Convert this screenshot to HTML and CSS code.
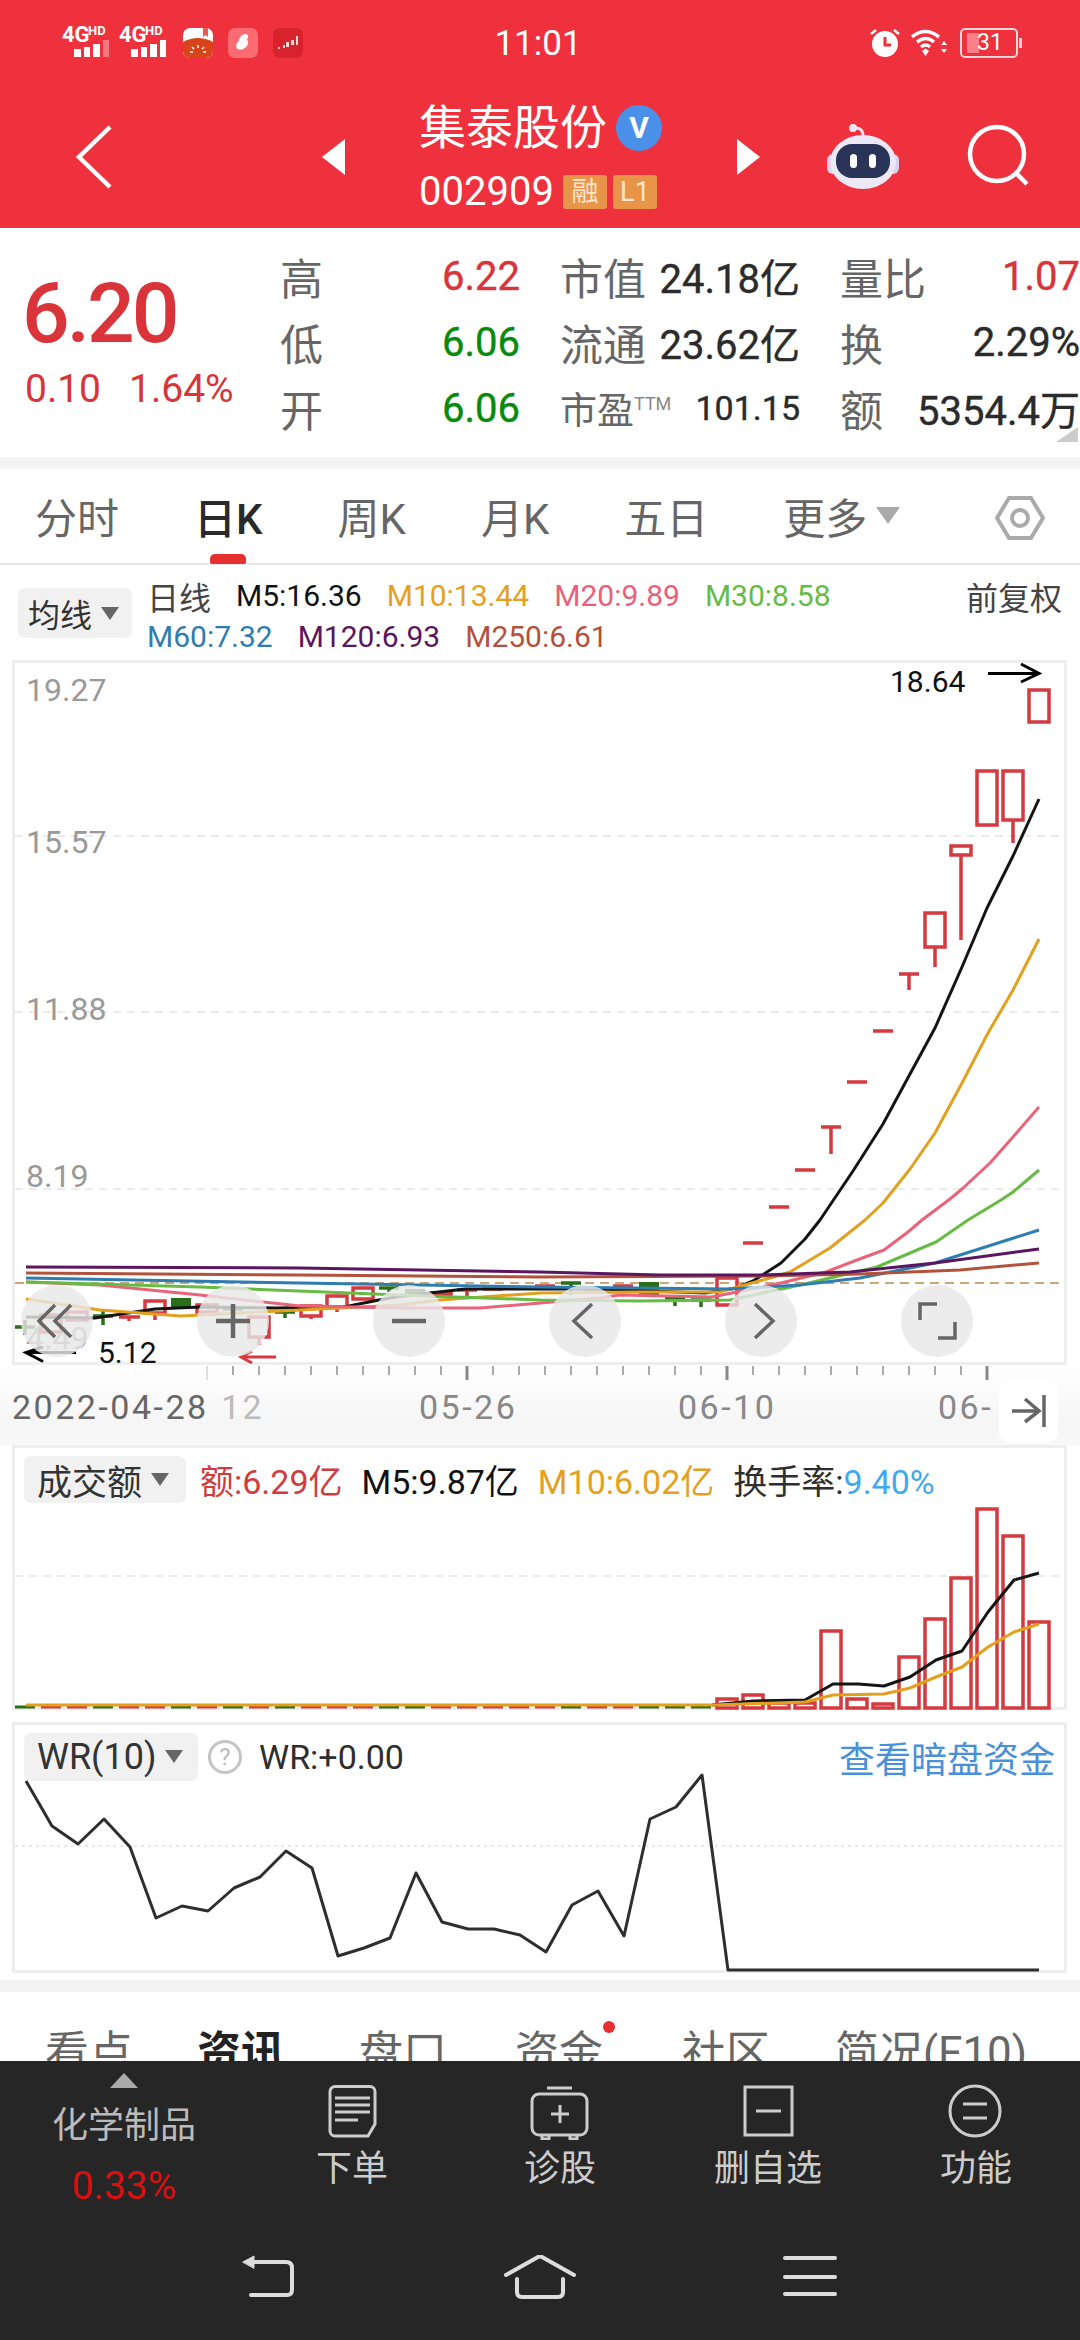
FILE: index.html
```html
<!DOCTYPE html>
<html lang="zh-CN">
  <head>
    <meta charset="UTF-8" />
    <meta name="viewport" content="width=device-width, initial-scale=1.0" />
    <title>集泰股份 002909</title>
    <link rel="stylesheet" href="styles.css">
  </head>
  <body>
    <div class="app">
      <!-- Top red header -->
      <header class="top">
        <div class="status">
          <div class="status-left">
            <svg class="signal" viewBox="0 -8 52 50" width="52" height="50">
              <text class="sig-4g" x="0" y="16">4G</text>
              <text class="sig-hd" x="26" y="9">HD</text>
              <path class="sig-bar" d="M12 23h7v8h-7zM22 21h6v10h-6zM31 18h7v13h-7z" />
              <path class="sig-off" d="M41 14h6v17h-6z" />
            </svg>
            <svg class="signal" viewBox="0 -8 52 50" width="52" height="50">
              <text class="sig-4g" x="0" y="16">4G</text>
              <text class="sig-hd" x="26" y="9">HD</text>
              <path class="sig-bar" d="M12 23h7v8h-7zM22 21h6v10h-6zM31 18h7v13h-7zM41 14h6v17h-6z" />
            </svg>
            <svg class="app-icon" viewBox="0 0 30 30" width="30" height="30">
              <rect class="i-white" width="30" height="30" rx="7" />
              <path class="i-orange" d="M0 14q15-8 30 0v9a7 7 0 0 1-7 7H7a7 7 0 0 1-7-7z" />
              <path class="i-mark" d="M20 0h5v9l-2.5-2-2.5 2z" />
              <path class="i-line" d="M15 17v3M9 19l2 2M21 19l-2 2M7 24h3M20 24h3" />
            </svg>
            <svg class="app-icon" viewBox="0 0 30 30" width="30" height="30">
              <rect class="i-pink" width="30" height="30" rx="7" />
              <path class="i-blob" d="M18 6c-5 0-7 4-7 7-3 2-4 6-1 8 4 2 10-2 10-6 0-2-1-3-1-4 2-1 1-5-1-5z" />
            </svg>
            <svg class="app-icon" viewBox="0 0 30 30" width="30" height="30">
              <rect class="i-dark" width="30" height="30" rx="7" />
              <path class="i-chart" d="M5 19h2v2H5zM10 17h2v3h-2zM13 14h3v5h-3zM18 12h3v5h-3zM23 8h2v9h-2z" />
            </svg>
          </div>
          <div class="clock">11:01</div>
          <div class="status-right">
            <svg viewBox="0 0 30 30" width="30" height="30">
              <circle class="i-fill" cx="15" cy="16" r="13" />
              <path class="i-hand" d="M15 9v8h6" />
              <path class="i-ear" d="M1 6l5-4M29 6l-5-4" />
            </svg>
            <svg viewBox="0 0 38 30" width="38" height="30">
              <path class="i-wave" d="M1 9q13-11 27 0M6 14q9-7 17 0M10 19q5-4 9 0" />
              <path class="i-fill" d="M11 23l3.5-2.5L18 23l-3.5 5zM30 17l3-4 3 4zM30 21h6l-3 4z" />
            </svg>
            <div class="battery">
              <span class="battery-level"></span>
              <span class="battery-num">31</span>
            </div>
          </div>
        </div>

        <div class="nav">
          <svg class="back" viewBox="0 0 40 66" width="40" height="66">
            <path d="M35 3L4 33l31 30" />
          </svg>
          <span class="tri tri-left"></span>
          <div class="title">
            <div class="title-row">
              <span class="name">集泰股份</span>
              <span class="vbadge">V</span>
            </div>
            <div class="code-row">
              <span class="code">002909</span>
              <span class="tag">融</span>
              <span class="tag">L1</span>
            </div>
          </div>
          <span class="tri tri-right"></span>
          <svg class="robot" viewBox="0 0 72 66" width="72" height="66">
            <path class="r-ant" d="M27 4q9-1 9 8" />
            <circle class="r-shell" cx="26" cy="4" r="4" />
            <rect class="r-ear" x="0" y="30" width="72" height="20" rx="6" />
            <ellipse class="r-shell" cx="36" cy="38" rx="33" ry="27" />
            <rect class="r-visor" x="9" y="20" width="54" height="34" rx="16" />
            <rect class="r-eye" x="23" y="30" width="7" height="14" rx="3.5" />
            <rect class="r-eye" x="42" y="30" width="7" height="14" rx="3.5" />
          </svg>
          <svg class="search" viewBox="0 0 62 66" width="62" height="66">
            <circle cx="30" cy="30" r="27" />
            <path d="M49 49l11 11" />
          </svg>
        </div>
      </header>

      <!-- Quote summary -->
      <section class="quote">
        <div class="price-box">
          <div class="price">6.20</div>
          <div class="change"><span>0.10</span><span>1.64%</span></div>
        </div>
        <div class="stats">
          <div class="cell"><span class="lab">高</span><span class="val red">6.22</span></div>
          <div class="cell"><span class="lab">市值</span><span class="val">24.18亿</span></div>
          <div class="cell"><span class="lab">量比</span><span class="val red">1.07</span></div>
          <div class="cell"><span class="lab">低</span><span class="val green">6.06</span></div>
          <div class="cell"><span class="lab">流通</span><span class="val">23.62亿</span></div>
          <div class="cell"><span class="lab">换</span><span class="val">2.29%</span></div>
          <div class="cell"><span class="lab">开</span><span class="val green">6.06</span></div>
          <div class="cell"><span class="lab lab-sm">市盈<sup class="ttm">TTM</sup></span><span class="val val-sm">101.15</span></div>
          <div class="cell"><span class="lab">额</span><span class="val">5354.4万</span></div>
        </div>
        <span class="corner"></span>
      </section>

      <div class="divider"></div>

      <!-- Period tabs -->
      <nav class="periods">
        <span>分时</span>
        <span class="active">日K</span>
        <span>周K</span>
        <span>月K</span>
        <span>五日</span>
        <span class="more">更多<i class="caret"></i></span>
        <svg class="hex" viewBox="0 0 50 50" width="50" height="50">
          <path d="M14 5h22l12 20-12 20H14L2 25z" />
          <circle cx="25" cy="25" r="8" />
        </svg>
      </nav>

      <div class="legend">
        <div class="pick pick-ma">均线<i class="caret-s"></i></div>
        <div class="legend-rows">
          <div class="legend-row">
            <span class="c-gray">日线</span>
            <span class="c-black">M5:16.36</span>
            <span class="c-orange">M10:13.44</span>
            <span class="c-pink">M20:9.89</span>
            <span class="c-lime">M30:8.58</span>
            <span class="adj">前复权</span>
          </div>
          <div class="legend-row">
            <span class="c-blue">M60:7.32</span>
            <span class="c-purple">M120:6.93</span>
            <span class="c-brown">M250:6.61</span>
          </div>
        </div>
      </div>

      <!-- Candles + moving averages -->
      <div class="panel panel-main">
        <svg class="plot" viewBox="15 663 1049 699" width="1049" height="699">
          <path class="grid" d="M15 836H1064M15 1012H1064M15 1189H1064" />
          <path class="base" d="M15 1283H1064" />
          <text class="axis-price" x="26" y="701">19.27</text>
          <text class="axis-price" x="26" y="853">15.57</text>
          <text class="axis-price" x="26" y="1020">11.88</text>
          <text class="axis-price" x="26" y="1187">8.19</text>
          <text class="axis-price" x="26" y="1349">4.49</text>

          <path class="k-down" d="M15 1327h20M25 1320v15M93 1316h20M103 1310v15M223 1309h20M275 1312h20M285 1312v6M379 1288h20M389 1288v4M561 1283h20M571 1283v12M665 1298h20M675 1298v8M691 1300h20M701 1300v7" />
          <path class="k-solid" d="M171 1298h20v10h-20zM405 1289h20v6h-20zM639 1282h20v13h-20z" />
          <path class="k-up" d="M41 1315h20v17h-20zM67 1312h20v8h-20zM119 1317h21M129 1317v4M145 1301h20v12h-20zM155 1313v7M197 1305h20v7h-20zM249 1317h20v20h-20zM259 1337v8M301 1306h20v10h-20zM311 1316v3M327 1296h20v11h-20zM337 1307v5M353 1288h20v11h-20zM431 1293h20v3h-20zM457 1290h20M467 1290v6M483 1289h20M509 1288h20M535 1286h20M587 1292h20M613 1286h20M623 1286v6M717 1278h20v27h-20zM743 1243h20M769 1207h20M795 1170h20M821 1127h20M831 1127v27M847 1082h20M873 1031h20M899 974h20M909 974v16M925 913h20v34h-20zM935 947v20M951 846h20v9h-20zM961 855v85M977 771h20v54h-20zM1003 771h20v49h-20zM1013 820v23M1029 690h20v32h-20z" />

          <polyline class="ma ma5" points="26,1317 95,1318 155,1309 200,1307 275,1308 344,1307 379,1300 396,1297 430,1293 465,1289 527,1289 600,1289 678,1292 705,1293 736,1288 753,1281 781,1263 805,1239 820,1220 853,1171 883,1124 910,1074 935,1028 962,967 987,908 1013,856 1039,799" />
          <polyline class="ma ma10" points="26,1299 100,1310 181,1316 280,1311 400,1305 440,1300 540,1293 640,1292 720,1292 770,1278 790,1272 830,1248 865,1220 883,1203 910,1169 935,1133 962,1083 988,1033 1013,990 1039,939" />
          <polyline class="ma ma20" points="26,1282 100,1285 200,1295 300,1306 400,1308 480,1308 600,1298 619,1295 712,1297 781,1283 826,1272 857,1260 884,1250 908,1232 922,1220 950,1199 962,1189 990,1163 1013,1137 1039,1107" />
          <polyline class="ma ma30" points="26,1282 200,1287 400,1295 540,1300 640,1301 730,1300 800,1285 877,1267 936,1242 968,1220 1001,1200 1013,1192 1039,1170" />
          <polyline class="ma ma60" points="26,1278 300,1283 540,1287 730,1289 800,1285 860,1278 935,1263 1039,1230" />
          <polyline class="ma ma250" points="26,1273 300,1275 540,1277 760,1276 860,1274 960,1270 1039,1263" />
          <polyline class="ma ma120" points="26,1267 300,1268 540,1272 660,1275 760,1275 850,1272 935,1263 1039,1249" />

          <text class="mark" x="890" y="692">18.64</text>
          <path class="arrow" d="M988 673.5H1039M1021 664l18 9.5-18 8.5" />
          <text class="mark" x="98" y="1363">5.12</text>
          <path class="arrow" d="M76 1352.5H26M43 1347l-17 5.5 17 9" />
          <path class="arrow-red" d="M276 1357H241M252 1351l-11 6 11 6" />
        </svg>

        <!-- Floating chart controls -->
        <div class="controls">
          <span class="ctl"><svg viewBox="0 0 72 72" width="72" height="72"><path d="M34 20L18 36l16 16M50 20L34 36l16 16" /></svg></span>
          <span class="ctl"><svg viewBox="0 0 72 72" width="72" height="72"><path class="thick" d="M19 36h34M36 19v34" /></svg></span>
          <span class="ctl"><svg viewBox="0 0 72 72" width="72" height="72"><path class="thick" d="M19 36h34" /></svg></span>
          <span class="ctl"><svg viewBox="0 0 72 72" width="72" height="72"><path d="M43 19L25 36l18 17" /></svg></span>
          <span class="ctl"><svg viewBox="0 0 72 72" width="72" height="72"><path d="M30 19l18 17-18 17" /></svg></span>
          <span class="ctl"><svg viewBox="0 0 72 72" width="72" height="72"><path d="M19 35V19h17M54 37v16H37" /></svg></span>
        </div>
      </div>

      <!-- Date axis -->
      <div class="axis">
        <svg viewBox="0 1365 1080 80" width="1080" height="80">
          <path class="tick-faint" d="M207 1366v14" />
          <path class="tick" d="M233 1366v9M259 1366v9M285 1366v9M311 1366v9M337 1366v9M363 1366v9M389 1366v9M415 1366v9M441 1366v9M493 1366v9M519 1366v9M545 1366v9M571 1366v9M597 1366v9M623 1366v9M649 1366v9M675 1366v9M701 1366v9M753 1366v9M779 1366v9M805 1366v9M831 1366v9M857 1366v9M883 1366v9M909 1366v9M935 1366v9M961 1366v9" />
          <path class="tick-major" d="M467 1366v14M727 1366v14M987 1366v14" />
          <text class="date date-dark" x="12" y="1419">2022-04-28</text>
          <text class="date date-faint" x="221" y="1419">12</text>
          <text class="date date-mid" x="419" y="1419">05-26</text>
          <text class="date date-mid" x="678" y="1419">06-10</text>
          <text class="date date-mid" x="938" y="1419">06-</text>
        </svg>
        <span class="jump">
          <svg viewBox="0 0 59 64" width="59" height="64"><path d="M13 32h27M26 20l14 12-14 11M45 16v32" /></svg>
        </span>
      </div>

      <!-- Turnover -->
      <div class="panel panel-vol">
        <div class="panel-head head-vol">
          <div class="pick pick-vol">成交额<i class="caret-s"></i></div>
          <span class="c-red">额:6.29亿</span>
          <span class="c-black">M5:9.87亿</span>
          <span class="c-orange">M10:6.02亿</span>
          <span class="c-dark">换手率:<em class="c-sky">9.40%</em></span>
        </div>
        <svg class="plot" viewBox="15 1503 1049 204" width="1049" height="204">
          <path class="grid" d="M15 1576H1064" />
          <path class="v-flat-g" d="M15 1707h20M93 1707h20M171 1707h20M223 1707h20M275 1707h20M379 1707h20M405 1707h20M561 1707h20M639 1707h20M665 1707h20M691 1707h20" />
          <path class="v-flat-r" d="M41 1707h20M67 1707h20M119 1707h20M145 1707h20M197 1707h20M249 1707h20M301 1707h20M327 1707h20M353 1707h20M431 1707h20M457 1707h20M483 1707h20M509 1707h20M535 1707h20M587 1707h20M613 1707h20" />
          <path class="k-up" d="M717 1708v-9h20v9zM743 1708v-13h20v13zM769 1708v-5h20v5zM795 1708v-5h20v5zM821 1708v-77h20v77zM847 1708v-9h20v9zM873 1708v-4h20v4zM899 1708v-51h20v51zM925 1708v-89h20v89zM951 1708v-130h20v130zM977 1708v-199h20v199zM1003 1708v-172h20v172zM1029 1708v-86h20v86z" />
          <polyline class="ma ma5" points="712,1705 753,1701 805,1700 833,1684 858,1684 884,1686 910,1677 936,1660 962,1651 988,1612 1014,1580 1039,1573" />
          <polyline class="ma ma10" points="26,1705 712,1705 805,1702 833,1695 884,1694 910,1688 936,1677 962,1667 988,1647 1014,1632 1039,1624" />
        </svg>
      </div>

      <!-- WR -->
      <div class="panel panel-wr">
        <div class="panel-head">
          <div class="pick pick-wr">WR(10)<i class="caret-s"></i></div>
          <span class="help">?</span>
          <span class="c-dark wr-val">WR:+0.00</span>
          <span class="link">查看暗盘资金</span>
        </div>
        <svg class="plot" viewBox="15 1781 1049 189" width="1049" height="189">
          <path class="grid-dot" d="M15 1847H1064" />
          <polyline class="wr-line" points="26,1782 52,1827 78,1845 104,1820 130,1848 156,1919 182,1907 208,1912 234,1889 260,1878 286,1852 312,1869 338,1957 364,1949 390,1939 416,1874 442,1923 468,1930 494,1930 520,1936 546,1953 572,1906 598,1892 624,1937 650,1820 676,1808 702,1776 728,1971 1039,1971" />
        </svg>
      </div>

      <div class="divider divider-low"></div>

      <!-- Section tabs, cut off by the dock -->
      <nav class="sections">
        <span>看点</span>
        <span class="active">资讯</span>
        <span>盘口</span>
        <span class="dotted">资金<i class="dot"></i></span>
        <span>社区</span>
        <span>简况(F10)</span>
      </nav>

      <!-- Bottom dock -->
      <footer class="dock">
        <div class="actions">
          <div class="sector">
            <i class="sector-up"></i>
            <span class="sector-name">化学制品</span>
            <span class="sector-pct">0.33%</span>
          </div>
          <div class="act">
            <svg viewBox="0 0 64 56" width="64" height="56">
              <path d="M15 2.5H50a5 5 0 0 1 5 5V40l-7 12H15a5 5 0 0 1-5-5V7.5a5 5 0 0 1 5-5z" />
              <path d="M15 14h35M15 21h35M15 28h35M15 36h23" />
            </svg>
            <span>下单</span>
          </div>
          <div class="act">
            <svg viewBox="0 0 64 56" width="64" height="56">
              <path d="M19 4h25" />
              <rect x="4" y="10" width="55" height="41" rx="7" />
              <path d="M14 51v4h7v-4M42 51v4h7v-4M32 21v18M23 30h18" />
            </svg>
            <span>诊股</span>
          </div>
          <div class="act">
            <svg viewBox="0 0 64 56" width="64" height="56">
              <rect x="9" y="3" width="47" height="48" />
              <path d="M20 27h25" />
            </svg>
            <span>删自选</span>
          </div>
          <div class="act">
            <svg viewBox="0 0 64 56" width="64" height="56">
              <circle cx="31" cy="27" r="25" />
              <path d="M19 20h24M19 34h24" />
            </svg>
            <span>功能</span>
          </div>
        </div>
        <div class="sysbar">
          <svg viewBox="0 0 80 48" width="80" height="48">
            <path class="sys-fill" d="M13 7L24 1v12z" />
            <path d="M20 7H56q6 0 6 6V35q0 5-5 5H21" />
          </svg>
          <svg viewBox="0 0 80 48" width="80" height="48">
            <path d="M6 20L38 2q2-1 4 0l32 18" />
            <path d="M17 24v13q0 5 5 5h36q5 0 5-5V24" />
          </svg>
          <svg viewBox="0 0 80 48" width="80" height="48">
            <path d="M15 3h50M15 22h50M15 39h50" />
          </svg>
        </div>
      </footer>
    </div>
  </body>
</html>
```

FILE: styles.css
```css
* {
  margin: 0;
  padding: 0;
  box-sizing: border-box;
}

html,
body {
  width: 1080px;
  height: 2340px;
  overflow: hidden;
  background: #fff;
}

.app {
  width: 1080px;
  height: 2340px;
  display: flex;
  flex-direction: column;
  font-family: Roboto, "Noto Sans CJK SC", sans-serif;
  color: #222;
  overflow: hidden;
}

i,
em {
  font-style: normal;
}

/* Header */
.top {
  height: 228px;
  flex: none;
  background: #ee313c;
  color: #fff;
}

.status {
  height: 86px;
  display: grid;
  grid-template-columns: 1fr auto 1fr;
  align-items: center;
  padding: 0 60px 0 62px;
}

.status-left {
  display: flex;
  align-items: center;
}

.status-left .signal {
  margin-right: 5px;
}

.status-left .signal + .app-icon {
  margin-left: 7px;
}

.app-icon {
  margin-right: 15px;
}

.status-right {
  display: flex;
  align-items: center;
  justify-content: flex-end;
  gap: 11px;
}

.clock {
  font-size: 35px;
  margin-left: -6px;
}

.sig-4g {
  font-size: 22px;
  font-weight: 700;
  fill: #fff;
}

.sig-hd {
  font-size: 13px;
  font-weight: 700;
  fill: #fff;
}

.sig-bar {
  fill: #fff;
}

.sig-off {
  fill: rgba(255, 255, 255, 0.35);
}

.i-white {
  fill: #fff;
}

.i-orange {
  fill: #d9441a;
}

.i-mark {
  fill: #ee5a4f;
}

.i-line {
  fill: none;
  stroke: #fff;
  stroke-width: 1.5;
}

.i-pink {
  fill: #fb6c72;
}

.i-blob {
  fill: #fff;
}

.i-dark {
  fill: #d8232e;
}

.i-chart {
  fill: #ffd6d6;
}

.i-fill {
  fill: #fff;
}

.i-hand {
  fill: none;
  stroke: #ee313c;
  stroke-width: 3;
}

.i-ear {
  fill: none;
  stroke: #fff;
  stroke-width: 2.5;
}

.i-wave {
  fill: none;
  stroke: #fff;
  stroke-width: 3.5;
}

.battery {
  position: relative;
  width: 58px;
  height: 30px;
  border: 2px solid #ffd7d9;
  border-radius: 5px;
  margin-right: 2px;
  text-align: center;
}

.battery::after {
  content: "";
  position: absolute;
  right: -6px;
  top: 8px;
  width: 3px;
  height: 10px;
  background: #ffd7d9;
}

.battery-level {
  position: absolute;
  left: 5px;
  top: 3px;
  width: 12px;
  height: 20px;
  background: #fb8089;
}

.battery-num {
  position: relative;
  font-size: 23px;
  line-height: 26px;
  display: block;
  margin-left: 2px;
}

.nav {
  height: 142px;
  display: flex;
  align-items: center;
}

.back {
  margin-left: 75px;
}

.back path {
  fill: none;
  stroke: #fff;
  stroke-width: 4.5;
}

.tri {
  width: 0;
  height: 0;
  border-top: 18px solid transparent;
  border-bottom: 18px solid transparent;
}

.tri-left {
  margin-left: 207px;
  border-right: 23px solid #fff;
}

.tri-right {
  margin-left: 74px;
  border-left: 23px solid #fff;
}

.title {
  margin-left: 74px;
  width: 244px;
  display: flex;
  flex-direction: column;
  gap: 24px;
}

.title-row {
  height: 46px;
  display: flex;
  align-items: center;
}

.name {
  font-size: 47px;
  line-height: 46px;
}

.vbadge {
  width: 46px;
  height: 46px;
  margin-left: 9px;
  border-radius: 50%;
  background: #4a90e8;
  font-size: 30px;
  font-weight: 700;
  line-height: 46px;
  text-align: center;
}

.code-row {
  height: 34px;
  display: flex;
  align-items: center;
}

.code {
  font-size: 40px;
  line-height: 34px;
  margin-right: 9px;
}

.tag {
  height: 34px;
  width: 46px;
  margin-right: 6px;
  border-radius: 3px;
  background: #e8954a;
  color: #fce6cf;
  font-size: 27px;
  line-height: 34px;
  text-align: center;
}

.robot {
  margin-left: 67px;
}

.r-ant {
  fill: none;
  stroke: #eee6f6;
  stroke-width: 3;
}

.r-shell {
  fill: #ece8f8;
}

.r-ear {
  fill: #d9d2ee;
}

.r-visor {
  fill: #2a3458;
}

.r-eye {
  fill: #fff;
}

.search {
  margin-left: 68px;
}

.search circle,
.search path {
  fill: none;
  stroke: #fff;
  stroke-width: 4.5;
}

/* Quote */
.quote {
  position: relative;
  height: 229px;
  flex: none;
  display: flex;
  padding: 15px 0 0 25px;
}

.price-box {
  width: 255px;
}

.price {
  margin: 27px 0 0 -3px;
  font-size: 84px;
  line-height: 88px;
  font-weight: 500;
  letter-spacing: -3px;
  color: #d8343a;
}

.change {
  margin-top: 9px;
  display: flex;
  gap: 28px;
  font-size: 39px;
  line-height: 44px;
  color: #d8343a;
}

.stats {
  display: grid;
  grid-template-columns: repeat(3, 240px);
  grid-auto-rows: 66px;
  column-gap: 40px;
}

.cell {
  display: flex;
  align-items: center;
  justify-content: space-between;
}

.lab {
  font-size: 43px;
  color: #666;
  white-space: nowrap;
}

.lab-sm {
  font-size: 37px;
}

.ttm {
  font-size: 18px;
  vertical-align: 14px;
  line-height: 0;
  color: #888;
}

.val {
  font-size: 40px;
  color: #2b2b2b;
  -webkit-text-stroke: 0.4px currentColor;
  white-space: nowrap;
}

.val-sm {
  font-size: 34px;
}

.val.red {
  color: #d8343a;
}

.val.green {
  color: #098a0c;
}

.corner {
  position: absolute;
  right: 2px;
  bottom: 15px;
  width: 0;
  height: 0;
  border-left: 22px solid transparent;
  border-bottom: 15px solid #ccc;
}

.divider {
  height: 12px;
  flex: none;
  background: #f4f4f4;
}

/* Period tabs */
.periods {
  position: relative;
  height: 96px;
  flex: none;
  display: flex;
  align-items: center;
  gap: 75px;
  padding: 0 0 2px 35px;
  border-bottom: 2px solid #e8e8e8;
  font-size: 42px;
  color: #666;
}

.periods .active {
  color: #2a2a2a;
  font-weight: 500;
}

.periods .active::after {
  content: "";
  position: absolute;
  left: 210px;
  bottom: -1px;
  width: 36px;
  height: 10px;
  border-radius: 5px 5px 2px 2px;
  background: #e5302f;
}

.more {
  display: flex;
  align-items: center;
  gap: 9px;
}

.caret {
  width: 0;
  height: 0;
  border-left: 12px solid transparent;
  border-right: 12px solid transparent;
  border-top: 17px solid #aaa;
}

.hex {
  position: absolute;
  right: 35px;
  top: 24px;
}

.hex path,
.hex circle {
  fill: none;
  stroke: #aaa;
  stroke-width: 4;
}

/* Indicator legend */
.legend {
  height: 95px;
  flex: none;
  display: flex;
  align-items: flex-start;
  padding: 10px 18px 0 18px;
  font-size: 30px;
}

.pick {
  flex: none;
  display: flex;
  align-items: center;
  border-radius: 7px;
  background: #f1f1f1;
  color: #333;
}

.pick-ma {
  width: 114px;
  height: 50px;
  margin-top: 13px;
  padding-left: 10px;
  font-size: 32px;
}

.caret-s {
  width: 0;
  height: 0;
  margin-left: 9px;
  border-left: 9px solid transparent;
  border-right: 9px solid transparent;
  border-top: 13px solid #666;
}

.legend-rows {
  flex: 1;
  margin-left: 15px;
}

.legend-row {
  height: 41px;
  display: flex;
  align-items: center;
  gap: 25px;
}

.adj {
  margin-left: auto;
  font-size: 32px;
  color: #444;
}

.c-gray {
  color: #444;
  font-size: 32px;
}

.c-black {
  color: #111;
}

.c-dark {
  color: #2e2e2e;
}

.c-orange {
  color: #e5a020;
}

.c-pink {
  color: #ea6078;
}

.c-lime {
  color: #66bb45;
}

.c-blue {
  color: #2f7db0;
}

.c-purple {
  color: #5a1660;
}

.c-brown {
  color: #b3523c;
}

.c-red {
  color: #d13b3e;
}

.c-sky {
  color: #3fa9f0;
}

/* Chart panels */
.panel {
  position: relative;
  flex: none;
  width: 1055px;
  margin-left: 12px;
  border: 3px solid #eee;
}

.plot {
  display: block;
  overflow: visible;
}

.panel-main {
  height: 705px;
}

.panel-vol {
  height: 265px;
}

.panel-wr {
  height: 251px;
  margin-top: 12px;
}

.panel-head {
  display: flex;
  align-items: center;
  font-size: 34px;
  white-space: nowrap;
  padding: 8px 0 0 9px;
  height: 55px;
  gap: 20px;
}

.head-vol {
  gap: 19px;
}

.pick-vol {
  width: 162px;
  height: 47px;
  margin-right: -5px;
  padding-left: 13px;
  font-size: 35px;
}

.pick-wr {
  width: 174px;
  height: 48px;
  padding-left: 13px;
  margin-right: -10px;
  font-size: 36px;
}

.help {
  width: 34px;
  height: 34px;
  border: 3px solid #c4c4c4;
  border-radius: 50%;
  color: #bbb;
  font-size: 24px;
  line-height: 28px;
  text-align: center;
}

.wr-val {
  margin-left: -3px;
}

.link {
  margin-left: auto;
  margin-right: 9px;
  font-size: 36px;
  color: #4a90d9;
}

.grid {
  fill: none;
  stroke: #ebebeb;
  stroke-width: 2;
  stroke-dasharray: 8 6;
}

.grid-dot {
  fill: none;
  stroke: #e8e8e8;
  stroke-width: 2;
  stroke-dasharray: 3 4;
}

.base {
  fill: none;
  stroke: #c9a97c;
  stroke-width: 2;
  stroke-dasharray: 9 6;
}

.axis-price {
  font-size: 32px;
  fill: #999;
}

.k-up {
  fill: none;
  stroke: #d43a3f;
  stroke-width: 3.5;
}

.k-down {
  fill: none;
  stroke: #2a6e1a;
  stroke-width: 3.5;
}

.k-solid {
  fill: #2a6e1a;
}

.ma {
  fill: none;
  stroke-width: 3;
  stroke-linejoin: round;
}

.ma5 {
  stroke: #141414;
}

.ma10 {
  stroke: #e2a01e;
}

.ma20 {
  stroke: #e9647a;
}

.ma30 {
  stroke: #66bb45;
}

.ma60 {
  stroke: #2f7db0;
}

.ma120 {
  stroke: #5a1660;
}

.ma250 {
  stroke: #b3523c;
}

.mark {
  font-size: 30px;
  fill: #111;
}

.arrow {
  fill: none;
  stroke: #000;
  stroke-width: 3;
}

.arrow-red {
  fill: none;
  stroke: #d43a3f;
  stroke-width: 3;
}

.controls {
  position: absolute;
  left: 6px;
  top: 622px;
  display: flex;
  gap: 104px;
}

.ctl {
  width: 72px;
  height: 72px;
  border-radius: 50%;
  background: rgba(232, 232, 232, 0.82);
}

.ctl svg {
  display: block;
}

.ctl path {
  fill: none;
  stroke: #666;
  stroke-width: 3.5;
}

.ctl path.thick {
  stroke-width: 4.5;
}

/* Date axis */
.axis {
  position: relative;
  height: 80px;
  flex: none;
  background: linear-gradient(to bottom, #fff 0%, #f6f6f6 70%, #f8f8f8 100%);
}

.axis svg {
  display: block;
}

.tick {
  fill: none;
  stroke: #aaa;
  stroke-width: 2;
}

.tick-faint {
  fill: none;
  stroke: #ddd;
  stroke-width: 2;
}

.tick-major {
  fill: none;
  stroke: #888;
  stroke-width: 3;
}

.date {
  font-size: 34px;
  letter-spacing: 2.5px;
}

.date-dark {
  fill: #666;
}

.date-faint {
  fill: #bbb;
}

.date-mid {
  fill: #888;
}

.jump {
  position: absolute;
  left: 999px;
  top: 14px;
  width: 59px;
  height: 64px;
  border-radius: 12px;
  background: #fff;
}

.jump path {
  fill: none;
  stroke: #666;
  stroke-width: 3.5;
}

.v-flat-g {
  fill: none;
  stroke: #2a6e1a;
  stroke-width: 3;
}

.v-flat-r {
  fill: none;
  stroke: #d43a3f;
  stroke-width: 3;
}

.wr-line {
  fill: none;
  stroke: #2e2e2e;
  stroke-width: 3;
  stroke-linejoin: round;
}

.divider-low {
  margin-top: 7px;
}

/* Section tabs */
.sections {
  position: relative;
  height: 69px;
  flex: none;
  display: grid;
  grid-template-columns: 152px 162px 156px 167px 153px auto;
  padding: 37px 0 0 45px;
  font-size: 44px;
  line-height: 48px;
  color: #666;
  overflow: hidden;
}

.sections .active {
  color: #222;
  font-weight: 700;
}

.dotted {
  position: relative;
  justify-self: start;
}

.dot {
  position: absolute;
  right: -12px;
  top: -8px;
  width: 12px;
  height: 12px;
  border-radius: 50%;
  background: #e5302f;
}

/* Dock */
.dock {
  flex: 1;
  background: #262626;
  color: #ccc;
}

.actions {
  height: 164px;
  display: grid;
  grid-template-columns: 248px repeat(4, 208px);
}

.sector {
  display: flex;
  flex-direction: column;
  align-items: center;
  padding-top: 12px;
}

.sector-up {
  width: 0;
  height: 0;
  border-left: 14px solid transparent;
  border-right: 14px solid transparent;
  border-bottom: 15px solid #aaa;
}

.sector-name {
  margin-top: 17px;
  font-size: 36px;
  line-height: 42px;
  color: #bbb;
}

.sector-pct {
  margin-top: 17px;
  font-size: 39px;
  line-height: 44px;
  color: #d81010;
}

.act {
  display: flex;
  flex-direction: column;
  align-items: center;
  padding-top: 23px;
  font-size: 36px;
  line-height: 40px;
}

.act svg {
  margin-bottom: 9px;
}

.act path,
.act rect,
.act circle {
  fill: none;
  stroke: #ccc;
  stroke-width: 3;
}

.sysbar {
  display: flex;
  justify-content: center;
  gap: 190px;
  padding-top: 30px;
}

.sysbar path {
  fill: none;
  stroke: #ddd;
  stroke-width: 4;
  stroke-linecap: round;
}

.sysbar path.sys-fill {
  fill: #ddd;
  stroke-width: 1;
}
```
